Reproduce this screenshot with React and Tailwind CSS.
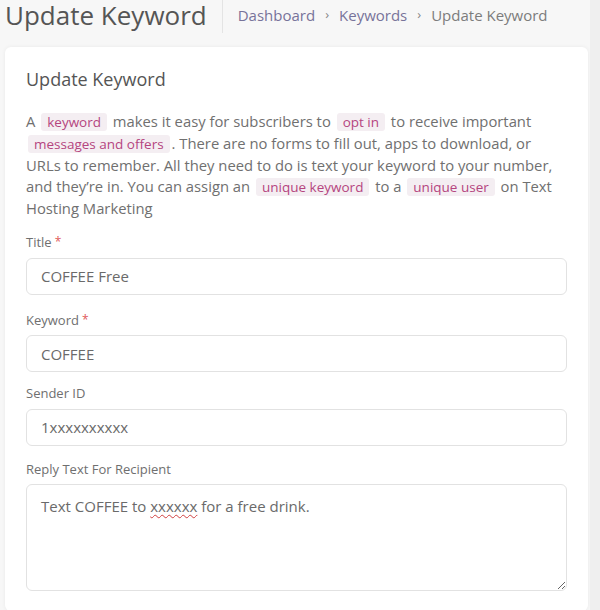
import React from "react";

const Tag = ({ children }) => (
  <code className="bg-[#f4eef2] text-[#b5457f] px-[6px] rounded-[3px] text-[13.5px] font-[inherit] mx-[2px]">
    {children}
  </code>
);

const Field = ({ label, required, value, gap }) => (
  <div className={gap}>
    <label className="block text-[13px] text-[#6f6f6f] mb-[5px]">
      {label}
      {required && <span className="text-[#e05a5a] ml-[3px] align-top text-[12px]">*</span>}
    </label>
    <input
      readOnly
      value={value}
      className="w-full h-[37px] border border-[#e2e2e2] rounded-[6px] px-[14px] text-[15px] text-[#6a6a6a] bg-white outline-none"
    />
  </div>
);

export default function App() {
  return (
    <div className="w-[600px] h-[610px] overflow-hidden bg-[#f7f7f7] font-['Open_Sans',sans-serif] flex">
      <div className="flex-1 pl-[5px] pr-[2px]">
        {/* page header */}
        <div className="flex items-center h-[30px]">
          <h1 className="text-[26px] text-[#555] leading-[30px]">Update Keyword</h1>
          <div className="w-px h-[34px] bg-[#e4e4e4] mx-[15px] mt-[2px]" />
          <nav className="flex items-center gap-[10px] text-[15px] text-[#77739a]">
            <span>Dashboard</span>
            <span className="text-[#888] text-[13px]">›</span>
            <span>Keywords</span>
            <span className="text-[#888] text-[13px]">›</span>
            <span className="text-[#7c7c7c]">Update Keyword</span>
          </nav>
        </div>

        {/* card */}
        <div className="mt-[17px] bg-white rounded-[6px] shadow-[0_0_4px_rgba(0,0,0,0.06)] px-[21px] pt-[19px] pb-[20px]">
          <h2 className="text-[18px] text-[#555] mb-[18px]">Update Keyword</h2>
          <p className="text-[14.8px] leading-[21px] text-[#707070] mb-[14px] whitespace-nowrap">
            A <Tag>keyword</Tag> makes it easy for subscribers to <Tag>opt in</Tag> to receive important
            <br />
            <Tag>messages and offers</Tag>. There are no forms to fill out, apps to download, or
            <br />
            URLs to remember. All they need to do is text your keyword to your number,
            <br />
            and they’re in. You can assign an <Tag>unique keyword</Tag> to a <Tag>unique user</Tag> on Text
            <br />
            Hosting Marketing
          </p>
          <Field label="Title" required value="COFFEE Free" gap="mb-[16px]" />
          <Field label="Keyword" required value="COFFEE" gap="mb-[12px]" />
          <Field label="Sender ID" value="1xxxxxxxxxx" gap="mb-[14px]" />
          <div>
            <label className="block text-[13px] text-[#6f6f6f] mb-[5px]">Reply Text For Recipient</label>
            <div className="w-full h-[107px] border border-[#e2e2e2] rounded-[6px] px-[14px] py-[10px] text-[15px] text-[#6a6a6a] bg-white resize overflow-auto">
              Text COFFEE to{" "}
              <span className="underline decoration-wavy decoration-[#d04040] decoration-1 underline-offset-2">
                xxxxxx
              </span>{" "}
              for a free drink.
            </div>
          </div>
        </div>
      </div>
      <div className="w-[10px] bg-[#efefef]" />
    </div>
  );
}
